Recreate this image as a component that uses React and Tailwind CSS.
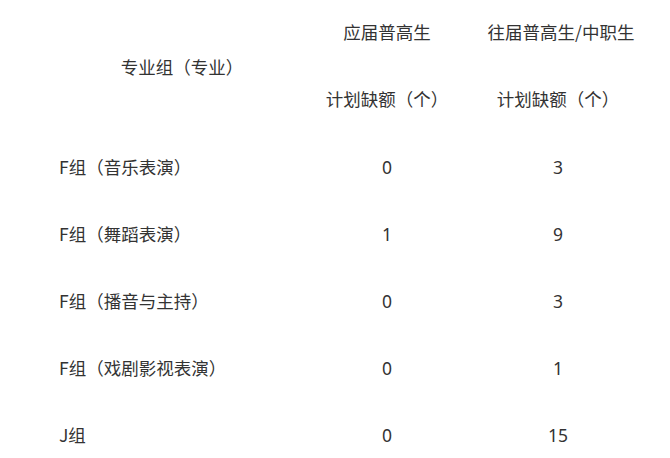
import React from 'react';

const rows = [
  { name: 'F组（音乐表演）', a: '0', b: '3' },
  { name: 'F组（舞蹈表演）', a: '1', b: '9' },
  { name: 'F组（播音与主持）', a: '0', b: '3' },
  { name: 'F组（戏剧影视表演）', a: '0', b: '1' },
  { name: 'J组', a: '0', b: '15' },
];

const App = () => {
  return (
    <div className="w-[670px] h-[458px] overflow-hidden bg-white text-[#333] text-[17.5px] leading-6 font-['Noto_Sans','Noto_Sans_CJK_SC',sans-serif] [text-spacing-trim:space-all]">
      <div className="grid grid-cols-[278px_218px_124px]">
        {/* 表头 */}
        <div className="h-[133px] flex items-center justify-center pl-[86px] whitespace-nowrap font-['Noto_Sans_CJK_SC',sans-serif]">
          专业组（专业）
        </div>
        <div className="h-[133px] flex flex-col items-center pt-[20px] gap-[43px] whitespace-nowrap font-['Noto_Sans_CJK_SC',sans-serif]">
          <span>应届普高生</span>
          <span>计划缺额（个）</span>
        </div>
        <div className="h-[133px] flex flex-col items-center pt-[20px] gap-[43px] whitespace-nowrap font-['Noto_Sans_CJK_SC',sans-serif]">
          <span className="pl-[6px]">往届普高生/中职生</span>
          <span>计划缺额（个）</span>
        </div>

        {/* 数据行 */}
        {rows.map((r) => (
          <React.Fragment key={r.name}>
            <div className="h-[67px] flex items-center pl-[59px] whitespace-nowrap font-['Noto_Sans_CJK_SC',sans-serif]">
              {r.name}
            </div>
            <div className="h-[67px] flex items-center justify-center">{r.a}</div>
            <div className="h-[67px] flex items-center justify-center">{r.b}</div>
          </React.Fragment>
        ))}
      </div>
    </div>
  );
};

export default App;
